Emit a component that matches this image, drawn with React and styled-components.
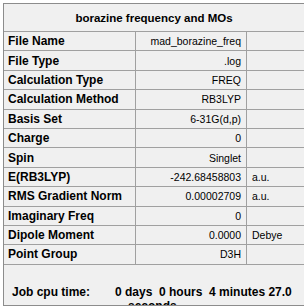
import React from "react";
import styled, { createGlobalStyle } from "styled-components";

const Global = createGlobalStyle`
  html, body { margin: 0; padding: 0; background: #ffffff; overflow: hidden; }
  body { font-family: "Liberation Sans", Arial, sans-serif; color: #000; }
`;

const Panel = styled.div`
  box-sizing: border-box;
  margin: 3px 0 0 3px;
  width: 301px;
  height: 303px;
  background: #f0f0f0;
  border-top: 1px solid #8c8c8c;
  border-left: 1px solid #8c8c8c;
  border-bottom: 1px solid #8c8c8c;
  overflow: hidden;
  display: flex;
  flex-direction: column;
`;

const Header = styled.div`
  box-sizing: border-box;
  height: 28px;
  border-bottom: 1px solid #a0a0a0;
  display: flex;
  align-items: center;
  justify-content: center;
  font-weight: bold;
  font-size: 11.5px;
  flex: none;
`;

const Row = styled.div`
  box-sizing: border-box;
  height: 19.4px;
  flex: none;
  display: grid;
  grid-template-columns: 132px 111px 1fr;
  border-bottom: 1px solid #a0a0a0;
`;

const Cell = styled.div`
  display: flex;
  align-items: center;
  white-space: nowrap;
  overflow: hidden;
`;

const Label = styled(Cell)`
  border-right: 1px solid #a0a0a0;
  padding-left: 4px;
  font-weight: bold;
  font-size: 12px;
`;

const Value = styled(Cell)`
  border-right: 1px solid #a0a0a0;
  justify-content: flex-end;
  padding-right: 5px;
  font-size: 10.5px;
`;

const Unit = styled(Cell)`
  padding-left: 5px;
  font-size: 10.5px;
`;

const Footer = styled.div`
  flex: 1;
  display: flex;
  padding: 20px 0 0 8px;
  font-weight: bold;
  font-size: 12px;
  line-height: 14px;
`;

const FooterLabel = styled.div`
  width: 103px;
  flex: none;
`;

const FooterValue = styled.div`
  white-space: pre;
`;

const Line = styled.div`
  padding-left: ${(p) => p.$indent || 0}px;
`;

const rows = [
  ["File Name", "mad_borazine_freq", ""],
  ["File Type", ".log", ""],
  ["Calculation Type", "FREQ", ""],
  ["Calculation Method", "RB3LYP", ""],
  ["Basis Set", "6-31G(d,p)", ""],
  ["Charge", "0", ""],
  ["Spin", "Singlet", ""],
  ["E(RB3LYP)", "-242.68458803", "a.u."],
  ["RMS Gradient Norm", "0.00002709", "a.u."],
  ["Imaginary Freq", "0", ""],
  ["Dipole Moment", "0.0000", "Debye"],
  ["Point Group", "D3H", ""],
];

export default function App() {
  return (
    <>
      <Global />
      <Panel>
        <Header>borazine frequency and MOs</Header>
        {rows.map(([l, v, u]) => (
          <Row key={l}>
            <Label>{l}</Label>
            <Value>{v}</Value>
            <Unit>{u}</Unit>
          </Row>
        ))}
        <Footer>
          <FooterLabel>Job cpu time:</FooterLabel>
          <FooterValue>
            <Line>{"0 days  0 hours  4 minutes 27.0"}</Line>
            <Line $indent={13}>seconds</Line>
          </FooterValue>
        </Footer>
      </Panel>
    </>
  );
}
